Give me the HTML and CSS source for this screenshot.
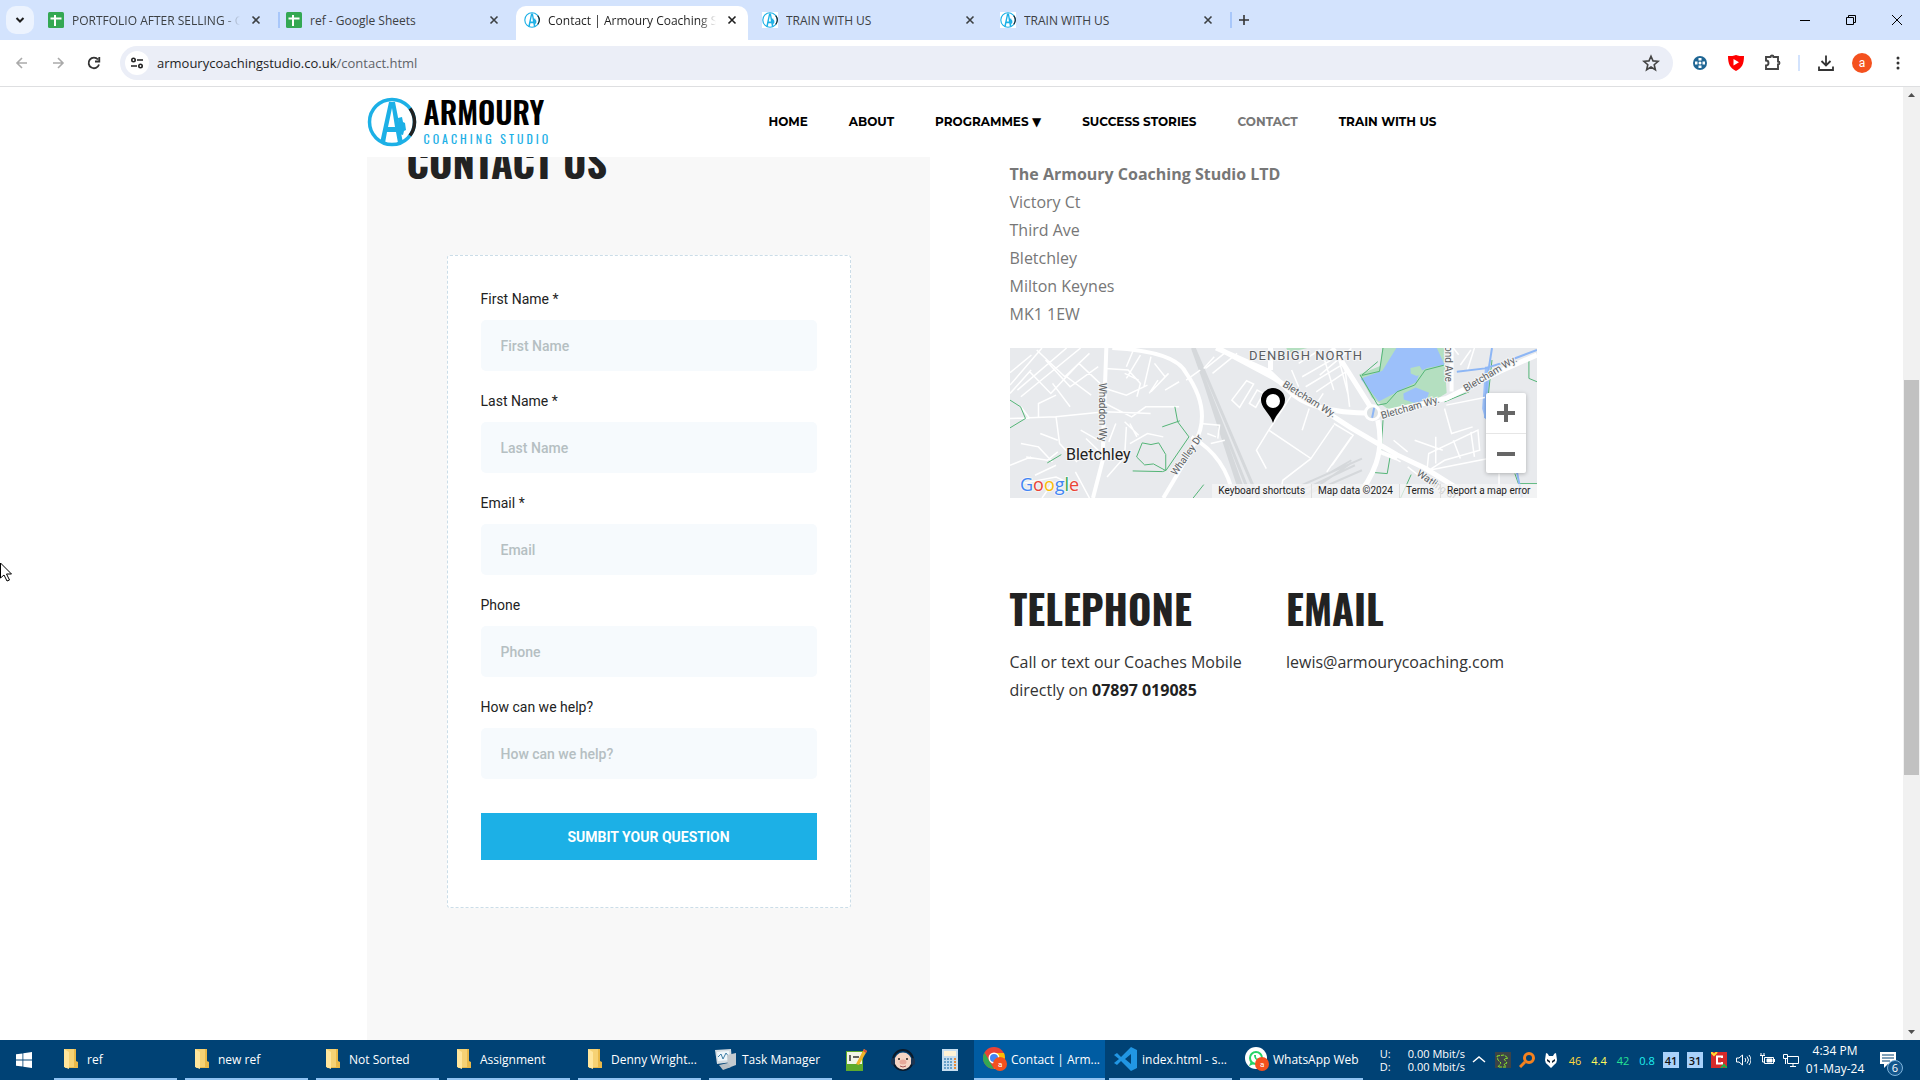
FILE: index.html
```html
<!DOCTYPE html>
<html lang="en">
<head>
<meta charset="utf-8">
<title>Contact | Armoury Coaching Studio</title>
<link rel="stylesheet" href="styles.css">
</head>
<body>
<svg class="defs" aria-hidden="true">
  <symbol id="sheet" viewBox="0 0 16 16"><rect width="16" height="16" rx="1.5" fill="#34a853"/><path d="M7 3v11M2.500 6.500h11" stroke="#fff" stroke-width="2"/></symbol>
  <symbol id="mark" viewBox="0 0 50 50"><circle cx="25" cy="25" r="22.500" fill="none" stroke="#1cb0e6" stroke-width="3.500"/><path d="M43 11.500A22.500 22.500 0 0 1 43 38.500" fill="none" stroke="#222" stroke-width="3.500"/><path d="M13 46 22 5h6l8 41h-5l-2-11h-9l-2 11zM21 30h7l-3-19z" fill="#1cb0e6" fill-rule="evenodd"/><path d="m31 21 4-1 1 5 2 1 1 7-2 1-1 4-4-1z" fill="#1cb0e6"/></symbol>
  <symbol id="x" viewBox="0 0 10 10"><path d="m1.500 1.500 7 7m0-7-7 7" stroke="currentColor" stroke-width="1.600"/></symbol>
  <symbol id="folder" viewBox="0 0 24 24"><path d="M5 2h12v12l2 1v6H6z" fill="#e9b94a"/><path d="M5 2h10v18H5z" fill="#f6d274"/><path d="m5 2 5 3v17l-5-2z" fill="#ffe69d"/></symbol>
</svg>

<div class="tabstrip">
  <button class="tab-search" aria-label="Search tabs"><svg width="10" height="8"><path d="m1.500 2 3.500 3.500L8.500 2" fill="none" stroke="#1f1f1f" stroke-width="2"/></svg></button>
  <div class="tab"><svg class="fav"><use href="#sheet"/></svg><span class="tab-title fade">PORTFOLIO AFTER SELLING - Google Sheets</span><button class="tab-close" aria-label="Close"><svg><use href="#x"/></svg></button></div>
  <div class="tab divided"><svg class="fav"><use href="#sheet"/></svg><span class="tab-title">ref - Google Sheets</span><button class="tab-close" aria-label="Close"><svg><use href="#x"/></svg></button></div>
  <div class="tab active"><svg class="fav"><use href="#mark"/></svg><span class="tab-title fade">Contact | Armoury Coaching Studio</span><button class="tab-close" aria-label="Close"><svg><use href="#x"/></svg></button></div>
  <div class="tab"><svg class="fav white"><use href="#mark"/></svg><span class="tab-title">TRAIN WITH US</span><button class="tab-close" aria-label="Close"><svg><use href="#x"/></svg></button></div>
  <div class="tab"><svg class="fav white"><use href="#mark"/></svg><span class="tab-title">TRAIN WITH US</span><button class="tab-close" aria-label="Close"><svg><use href="#x"/></svg></button></div>
  <button class="new-tab divided" aria-label="New tab"><svg width="12" height="12"><path d="M6 1v10M1 6h10" stroke="#333" stroke-width="1.600"/></svg></button>
  <div class="window-buttons">
    <button aria-label="Minimise"><svg width="12" height="12"><path d="M1 6.500h10" stroke="#000"/></svg></button>
    <button aria-label="Restore"><svg width="12" height="12"><path d="M1.500 3.500h7v7h-7zM3.500 3V1.500h7v7H9" fill="none" stroke="#000"/></svg></button>
    <button aria-label="Close window"><svg width="12" height="12"><path d="m1 1 10 10M11 1 1 11" stroke="#000"/></svg></button>
  </div>
</div>

<div class="toolbar">
  <button class="tool" aria-label="Back"><svg width="16" height="16"><path d="M13 8H3m5-5L3 8l5 5" fill="none" stroke="#aaa" stroke-width="1.600"/></svg></button>
  <button class="tool" aria-label="Forward"><svg width="16" height="16"><path d="M3 8h10M8 3l5 5-5 5" fill="none" stroke="#aaa" stroke-width="1.600"/></svg></button>
  <button class="tool" aria-label="Reload"><svg width="16" height="16"><path d="M13 9.500A5.300 5.300 0 1 1 12 4.500M13.300 2v4.500H9" fill="none" stroke="#333" stroke-width="1.800"/></svg></button>
  <div class="omnibox">
    <button class="site-info" aria-label="Site information"><svg width="14" height="14" fill="none" stroke="#222" stroke-width="1.600"><circle cx="3.500" cy="4" r="1.700"/><path d="M7 4h6M1 10h6"/><circle cx="10.500" cy="10" r="1.700"/></svg></button>
    <span class="url">armourycoachingstudio.co.uk<span>/contact.html</span></span>
    <button class="star" aria-label="Bookmark"><svg width="18" height="18"><path d="m9 2.200 2 4.700 5.100.4-3.900 3.400 1.200 5L9 13l-4.400 2.700 1.200-5-3.900-3.400L7 6.900z" fill="none" stroke="#444" stroke-width="1.600"/></svg></button>
  </div>
  <div class="extensions">
    <button class="ext" aria-label="Extension"><svg width="16" height="16"><circle cx="8" cy="8" r="7" fill="#1f6694"/><path d="M6.500 3h3v2.500h-3zM6.500 10.500h3V13h-3zM3 6.500h2.500v3H3zM10.500 6.500H13v3h-2.500z" fill="#fff"/><circle cx="8" cy="8" r="1.500" fill="#fff"/></svg></button>
    <button class="ext" aria-label="Video blocker"><svg width="16" height="16"><path d="M8 0c2 1 5 1 8 1 0 8-2 12-8 15C2 13 0 9 0 1c3 0 6 0 8-1z" fill="#f00"/><path d="m5.500 4 5.500 3.200-5.500 3.200z" fill="#fff"/></svg></button>
    <button class="ext" aria-label="Extensions"><svg width="18" height="18"><path d="M3 3h4.500a1.500 1.500 0 0 1 3 0H15v4.500a1.500 1.500 0 0 1 0 3V15H3v-3.500a2.500 2.500 0 0 0 0-5z" fill="none" stroke="#444" stroke-width="1.900"/></svg></button>
    <span class="rule"></span>
    <button class="ext" aria-label="Downloads"><svg width="18" height="18"><path d="M9 1.500v9M4.500 7 9 11.500 13.500 7M2 12.500V16h14v-3.500" fill="none" stroke="#333" stroke-width="1.800"/></svg></button>
    <button class="ext avatar" aria-label="Profile">a</button>
    <button class="ext" aria-label="Menu"><svg width="4" height="16" fill="#333"><circle cx="2" cy="3" r="1.500"/><circle cx="2" cy="8" r="1.500"/><circle cx="2" cy="13" r="1.500"/></svg></button>
  </div>
</div>

<div class="viewport">
  <div class="page">
    <header class="site-header">
      <div class="container header-row">
        <a class="brand" href="#"><svg width="50" height="50"><use href="#mark"/></svg><span class="brand-text"><strong>ARMOURY</strong><span>COACHING STUDIO</span></span></a>
        <nav class="site-nav"><a href="#">HOME</a><a href="#">ABOUT</a><a href="#">PROGRAMMES <span class="caret">▼</span></a><a href="#">SUCCESS STORIES</a><a class="current" href="#">CONTACT</a><a href="#">TRAIN WITH US</a></nav>
      </div>
    </header>
    <main class="container content">
      <section class="enquiry">
        <h1>CONTACT US</h1>
        <form class="card">
          <div class="field"><label for="first">First Name *</label><input id="first" type="text" placeholder="First Name"></div>
          <div class="field"><label for="last">Last Name *</label><input id="last" type="text" placeholder="Last Name"></div>
          <div class="field"><label for="email">Email *</label><input id="email" type="email" placeholder="Email"></div>
          <div class="field"><label for="phone">Phone</label><input id="phone" type="tel" placeholder="Phone"></div>
          <div class="field"><label for="help">How can we help?</label><input id="help" type="text" placeholder="How can we help?"></div>
          <button class="submit" type="button">SUMBIT YOUR QUESTION</button>
        </form>
      </section>
      <section class="details">
        <address><strong>The Armoury Coaching Studio LTD</strong><br>Victory Ct<br>Third Ave<br>Bletchley<br>Milton Keynes<br>MK1 1EW</address>
        <div class="map">
          <svg class="map-art" viewBox="29 24 1499 449" preserveAspectRatio="none" fill="none">
            <path fill="#b4dfc0" d="M815 24h60l-55 14zM1088 24h175l8 135-40 25-125 24-48-35-36-70 60-25z"/>
            <path fill="#9cc0fa" d="M1128 24h115l22 50-50 10-20 10-10 32-55 30-52 28-52-68 62-24zM1148 160l35-18 38 16-8 24-36 6-28-10zM1380 80l12 0-2 165-10-10-8-30z"/>
            <path fill="#b4dfc0" d="M1168 84l26-6 12 20-20 10-17-8z"/>
            <g stroke="#d5d8db" stroke-width="3"><path d="M548 24 700 473M553 24 735 473M556 40 690 473M560 60 715 473"/><path stroke-width="2" d="M815 455 1030 355M830 465 1010 375M850 473 1030 390M880 455 1000 368M935 400 1000 360"/></g>
            <g stroke="#fff" stroke-width="1.500">
              <path d="M29 98 90 45M29 135 120 24M50 150 190 24M60 170 230 24M85 95l60 65 80-90M105 30l80 80 70-70M29 160l60-70M130 60l70 80 80-60M150 130l50 70M190 110l70 55M225 70l60 60M29 235l130-5 140-15 130 5M160 230l10 80 50 55M110 235v-45l50-25M85 235l-25-35M60 310l50 10 40 45M75 350l60 10 30-25M165 300l-50-20M29 375l60-25M100 405l60-30M60 430l100-20 40 20M120 473l30-45 50-5M215 395l40 78M300 85l65 5 35 40-10 40M300 145l60 20 60-30M300 190l75 40 40-30 95 0M380 30l-20 50M400 45l-40 70M430 50l-20 90M450 120l-25 40M355 100l40 20M355 245l40 40M330 250l-20 55M280 300l-50-30M245 295l35 35M360 260l-5 90-50 60M370 310l50-30 45 10M390 290l-20-40M480 100l-50 55M470 150l40-25M530 120l40-30M440 70l30 40M580 85l30-35M570 250l55 5-5 40M590 280l25 10M600 310l40-10"/>
              <path d="M585 85l60-50M605 100l70-60M660 180l42-58 20 10-40 70zM710 190l22-40 18 10-22 42zM830 165l-65 105-35 60 28 55M765 270l120 85 65-100M880 205l-20 65M920 160l-25 40M850 70l60-40M860 110l100-60M870 140l110-70M900 155l85-60M830 90l20 50M915 30l35 120M960 40l30 120M1000 25l-90 80M980 70l15 130M885 355l-80 65-10 50M950 250l55 35-60 90M1000 290l-70 105"/>
              <path d="M1265 205l20 75 60-20M1270 195l120-25M1180 300l80 30M1215 390l5-50 140-70 5 60-100 30-45 30 170-35M1140 365l-50-30M1160 380l50 40M1290 24l15 20M1310 75l30-45M1330 90l20-66M1120 300l40 35M1240 290v80M1290 300l20 55M1340 275l10 75M1420 400v60"/>
            </g>
            <g stroke="#54b577" stroke-width="1">
              <path d="M29 180l30 20 14 35-44 28M135 368l40-25M498 200l8 45 32 45-65 100-10 4-85-2M462 260l50-18M389 350l16-42 25 5 22-5 20 35 0 48-35-20-25 3zM1090 24l-10 70-50 12M1030 105l45-40M1025 105l50 90 25-5 30-35 50-20 30-45 55-15M1085 340l25 10-8 50-35-3M1090 240l-5 90M1265 185l70-30M1470 70l35-15v60l23 10M1465 400l10 30h53M1400 60l-15 150M1140 473l30-70M550 473l30-40"/>
            </g>
            <g stroke="#8db6f5" stroke-width="2"><path d="M1300 95l80-10 60-20 88-35M1400 24l-15 100-5 110M1470 390l15 80"/></g>
            <g stroke="#fff" stroke-width="4">
              <path d="M303 24l-8 235-2 100-28 114M320 24q180 10 210 75 60 90 40 170-10 40-105 204M545 290q100 60 120 183"/>
              <path stroke-width="5" d="M615 24l150 70 55 55q60 70 240 70M1080 220l190-45 150-80 108-50M1075 240q15 70-5 130t-60 103M1060 210l-90-150-25-36M620 24l160 90 220 150 130 80 80 40 120 79M770 90V24"/>
              <path d="M1285 24v130M1080 335l50 20"/>
            </g>
            <ellipse cx="1060" cy="218" rx="20" ry="21" fill="#dce1e3" stroke="#fff" stroke-width="3"/><path d="M1065 203l-6 30" stroke="#8db6f5" stroke-width="2"/>
          </svg>
          <svg class="map-labels">
            <text class="area" x="239" y="12">DENBIGH NORTH</text>
            <text class="town" x="56" y="112">Bletchley</text>
            <text class="road" transform="translate(89 35) rotate(90)">Whaddon Wy</text>
            <text class="road" transform="translate(166 128) rotate(-55)">Whalley Dr</text>
            <text class="road" transform="translate(272 38) rotate(32)">Bletcham Wy.</text>
            <text class="road" transform="translate(372 71) rotate(-16)">Bletcham Wy.</text>
            <text class="road" transform="translate(456 44) rotate(-31)">Bletcham Wy.</text>
            <text class="road" transform="translate(435 -2) rotate(90)">ond Ave</text>
            <text class="road" transform="translate(406 127) rotate(34)">Watling St</text>
            <path d="M263 75c-3-10-12-15-12-23a12 12 0 0 1 24 0c0 8-9 13-12 23z"/><circle cx="263" cy="53" r="7" fill="#fff"/>
            <text class="google" x="10" y="143"><tspan fill="#4285f4">G</tspan><tspan fill="#ea4335">o</tspan><tspan fill="#fbbc05">o</tspan><tspan fill="#4285f4">g</tspan><tspan fill="#34a853">l</tspan><tspan fill="#ea4335">e</tspan></text>
          </svg>
          <div class="map-zoom"><button aria-label="Zoom in"><svg width="18" height="18"><path d="M9 0v18M0 9h18" stroke="#666" stroke-width="4"/></svg></button><button aria-label="Zoom out"><svg width="18" height="18"><path d="M0 9h18" stroke="#666" stroke-width="4"/></svg></button></div>
          <div class="map-legal"><a href="#">Keyboard shortcuts</a><span>Map data ©2024</span><a href="#">Terms</a><a href="#">Report a map error</a></div>
        </div>
        <div class="reach">
          <div><h2>TELEPHONE</h2><p>Call or text our Coaches Mobile directly on <strong>07897 019085</strong></p></div>
          <div><h2>EMAIL</h2><p><a href="#">lewis@armourycoaching.com</a></p></div>
        </div>
      </section>
    </main>
  </div>
  <div class="scrollbar"><svg width="17" height="17"><path d="m5 10 3.500-4 3.500 4z" fill="#505050"/></svg><div class="track"><div class="thumb"></div></div><svg width="17" height="17"><path d="m5 7 3.500 4L12 7z" fill="#505050"/></svg></div>
</div>

<div class="taskbar">
  <button class="start" aria-label="Start"><svg width="16" height="16" fill="#fff"><path d="M0 2.300 6.500 1.400v6.200H0zM7.300 1.300 16 0v7.600H7.300zM0 8.400h6.500v6.200L0 13.700zM7.300 8.400H16V16l-8.700-1.300z"/></svg></button>
  <div class="tasks">
    <button class="task"><svg><use href="#folder"/></svg>ref</button>
    <button class="task"><svg><use href="#folder"/></svg>new ref</button>
    <button class="task"><svg><use href="#folder"/></svg>Not Sorted</button>
    <button class="task"><svg><use href="#folder"/></svg>Assignment</button>
    <button class="task"><svg><use href="#folder"/></svg>Denny Wright...</button>
    <button class="task"><svg viewBox="0 0 24 24"><path d="m1 3 16-1 1 13-15 2z" fill="#d5dde2"/><path d="m3 5 12-1 1 9-12 1z" fill="#eef6fb"/><path d="m4 10 3-3 2 5 3-6 3 4" fill="none" stroke="#3d7da5"/><path d="m13 8 9-2v12l-8 3z" fill="#c3cacf"/><path d="m5 18 9-2 3 4-8 3z" fill="#b7bfc5"/></svg>Task Manager</button>
  </div>
  <div class="pinned">
    <button aria-label="Notepad++"><svg viewBox="0 0 24 24"><path d="M2 3h17v20H2z" fill="#5eaa2c"/><path d="M3 4h15v12H3z" fill="#f2f5e8"/><path d="M6 7v6M9 9h6" stroke="#333" stroke-width="1.500"/><path d="m12 16 8-15 3 2-8 14z" fill="#f0b429"/><path d="m20 1 3 2-1 2-3-2z" fill="#d6503d"/></svg></button>
    <button aria-label="Assistant"><svg viewBox="0 0 24 24"><circle cx="12" cy="12" r="10" fill="none" stroke="#0b1a2a" stroke-width="2"/><circle cx="12" cy="13" r="8.500" fill="#f6d5c4"/><ellipse cx="12" cy="14" rx="3.500" ry="2.500" fill="#e8a99a"/><circle cx="8" cy="11" r="1" fill="#222"/><circle cx="16" cy="11" r="1" fill="#222"/><path d="M9 18q3 2 6 0" fill="none" stroke="#a55"/><rect y="10" width="4" height="7" rx="2" fill="#1b3552"/><rect x="20" y="10" width="4" height="7" rx="2" fill="#1b3552"/></svg></button>
    <button aria-label="Calculator"><svg viewBox="0 0 24 24"><path d="M4 1h16v22H4z" fill="#c7def0"/><path d="M6 3h12v5H6z" fill="#fff3d6"/><path d="M6 11h9M6 14h9M6 17h9M6 20h9" stroke="#4b8dbd" stroke-width="1.500" stroke-dasharray="2 1"/><path d="M17 10v11" stroke="#e58b3a" stroke-width="2" stroke-dasharray="2 1"/></svg></button>
  </div>
  <div class="tasks">
    <button class="task on"><svg viewBox="0 0 24 24"><circle cx="11" cy="11" r="11" fill="#ea4335"/><path d="M1.500 5.500 11 22A11 11 0 0 1 1.500 5.500z" fill="#34a853"/><path d="M11 22 22 11a11 11 0 0 0-1-5H11z" fill="#fbbc05"/><circle cx="11" cy="11" r="5.500" fill="#fff"/><circle cx="11" cy="11" r="4" fill="#4285f4"/><circle cx="17" cy="17" r="7" fill="#f4511e"/><text x="15" y="20">a</text></svg>Contact | Arm...</button>
    <button class="task"><svg viewBox="0 0 24 24"><path d="m17 0 6 3v18l-6 3L7 14l-4 4-3-2 5-4-5-4 3-2 4 4zm0 7-6 5 6 5z" fill="#2196e3" fill-rule="evenodd"/></svg>index.html - s...</button>
    <button class="task"><svg viewBox="0 0 24 24"><circle cx="11" cy="11" r="11" fill="#fff"/><circle cx="11" cy="11" r="6" fill="none" stroke="#25d366" stroke-width="2"/><path d="m4 19 2-5 3 3zM9 8q0 5 5 6l1-2-2-1-1 1-1-2v-2z" fill="#25d366"/><circle cx="17" cy="17" r="7" fill="#f4511e"/><text x="15" y="20">a</text></svg>WhatsApp Web</button>
  </div>
  <div class="netspeed"><span>U:</span><span>0.00 Mbit/s</span><span>D:</span><span>0.00 Mbit/s</span></div>
  <div class="tray">
    <svg><path d="m2 10 6-5 6 5" fill="none" stroke="#fff" stroke-width="1.500"/></svg>
    <svg><path fill="#3c4347" d="M0 0h16v16H0z"/><path d="m2 4 7-1 4 3-4 1 3 4-3 1 2 3H3l3-4-3-3z" fill="none" stroke="#8be52c" stroke-dasharray="3 1"/></svg>
    <svg><circle cx="10" cy="6" r="4.500" fill="none" stroke="#f5821f" stroke-width="3"/><path d="m6 10-5 5" stroke="#f5821f" stroke-width="3"/></svg>
    <svg><path d="M3 1q2 0 3 3h4q1-3 3-3l1 7q0 3-3 5l-3 3-3-3Q2 11 2 8z" fill="#fff"/><path d="m4 7 3 2v2L4 9zM12 7 9 9v2l3-2z" fill="#123"/></svg>
    <span class="yellow">46</span><span class="pale">4.4</span><span class="mint">42</span><span class="aqua">0.8</span>
    <span class="chip">41</span><span class="chip">31</span>
    <svg><path fill="#d52b2b" d="M0 0h16v16H0z"/><path d="M11 6V4.500H6v7h5V10" fill="none" stroke="#fff" stroke-width="2"/><path d="m0 0 3 3 3-3" stroke="#ffdc31" fill="none" stroke-width="2"/><path d="m10 16 3-3 3 3" stroke="#20b34a" fill="none" stroke-width="2"/></svg>
    <svg fill="none" stroke="#fff"><path d="M1.500 6v4H4l3.500 3V3L4 6zM10 6q1.500 2 0 4M12 4.500q3 3.500 0 7M14 3q4 5 0 10"/></svg>
    <svg fill="none" stroke="#fff"><path d="M5.500 5.500h9v6h-9zM15.500 7v3M1 3.500h5M2 1v2M5 1v2M3.500 4v6h2"/><path fill="#fff" d="M8 7h5v3H8z"/></svg>
    <svg fill="none" stroke="#fff"><path d="M4.500 4.500h11v7h-11zM10 12v2M7 14.500h6M.500 2.500h4v4h-4zM2.500 7v5"/></svg>
  </div>
  <div class="clock"><span>4:34 PM</span><span>01-May-24</span></div>
  <button class="notices" aria-label="Notifications"><svg width="26" height="22"><path d="M2 3h16v12h-8l-4 4v-4H2z" fill="#fff"/><path d="M4 6h12M4 9h12M4 12h8" stroke="#004275"/></svg><span class="badge">6</span></button>
</div>
<svg class="pointer" width="12" height="20"><path d="M.500 1v15l3.500-3 3 6 2.500-1-3-6h5z" fill="#fff" stroke="#000"/></svg>
</body>
</html>
```
FILE: styles.css
```css
* { box-sizing: border-box; }
body { margin: 0; height: 100vh; display: flex; flex-direction: column; overflow: hidden; background: #fff; font-family: "Open Sans", sans-serif; font-size: 12px; }
button { border: 0; padding: 0; background: none; font: inherit; color: inherit; display: flex; align-items: center; justify-content: center; }
a { color: inherit; text-decoration: none; }
h1, h2, p { margin: 0; }
svg { flex: none; }
.defs { position: absolute; width: 0; height: 0; }

/* Browser tabs */
.tabstrip { flex: none; height: 40px; display: flex; align-items: center; background: #d3e3fd; }
.tab-search { width: 28px; height: 28px; margin: 0 6px; border-radius: 10px; background: #ecf3fe; }
.tab { width: 238px; height: 28px; padding: 0 14px 0 8px; display: flex; align-items: center; gap: 8px; color: #3c4043; }
.tab.active { align-self: flex-end; width: 232px; height: 34px; margin-right: 6px; padding: 0 8px 6px 8px; background: #fff; border-radius: 10px 10px 0 0; color: #1f1f1f; }
.fav { width: 16px; height: 16px; }
.fav.white { background: #fff; }
.tab-title { flex: 1; overflow: hidden; white-space: nowrap; }
.fade { mask-image: linear-gradient(90deg, #000 90%, transparent); }
.tab-close { width: 16px; height: 16px; }
.tab-close svg { width: 10px; height: 10px; }
.divided { background: linear-gradient(#a8c7fa, #a8c7fa) 0 center / 2px 16px no-repeat; }
.new-tab { width: 28px; height: 28px; }
.window-buttons { margin-left: auto; display: flex; }
.window-buttons button { width: 46px; height: 40px; }

/* Address bar */
.toolbar { flex: none; height: 47px; padding: 0 4px; display: flex; align-items: center; border-bottom: 1px solid #dedfe1; }
.tool { width: 36px; height: 34px; }
.omnibox { flex: 1; height: 34px; margin-left: 8px; padding: 0 12px 0 5px; display: flex; align-items: center; gap: 8px; border-radius: 17px; background: #ebeef7; font-size: 13px; }
.site-info { width: 24px; height: 24px; border-radius: 50%; background: #fff; }
.url { color: #1f1f1f; }
.url span { color: #5f6368; }
.star { margin-left: auto; width: 20px; }
.extensions { display: flex; align-items: center; padding-left: 9px; }
.ext { width: 36px; height: 30px; }
.rule { width: 2px; height: 16px; margin: 0 8px; background: #d3e3fd; }
.avatar { width: 20px; height: 20px; margin: 0 8px; border-radius: 50%; background: #f4511e; color: #fff; font-family: Roboto, sans-serif; }

/* Web page */
.viewport { flex: 1; min-height: 0; display: flex; }
.page { flex: 1; overflow: hidden; }
.container { width: 100%; max-width: 1170px; margin: 0 auto; }
.site-header { position: relative; z-index: 1; background: #fff; }
.header-row { height: 70px; padding: 0 100px 0 0; display: flex; align-items: center; justify-content: space-between; }
.brand { display: flex; align-items: center; gap: 7px; color: #1cb0e6; }
.brand-text { display: flex; flex-direction: column; font-family: Oswald, "Liberation Sans Narrow", sans-serif; font-size: 12px; font-weight: 400; line-height: 20px; letter-spacing: 3px; }
.brand-text strong { color: #000; font-size: 30px; font-weight: 600; line-height: 34px; letter-spacing: 0; }
.site-nav { display: flex; gap: 41px; font: 700 12px/20px Montserrat, sans-serif; color: #000; }
.caret { font-family: "DejaVu Sans", sans-serif; }
.current { color: #777; }
.content { display: grid; grid-template-columns: 563fr 527fr; gap: 80px; }
.enquiry { padding: 0 79px 160px 80px; background: #f8f8f8; }
h1, h2 { font-family: Oswald, "Liberation Sans Narrow", sans-serif; font-size: 40px; line-height: 44px; font-weight: 700; color: #222; white-space: nowrap; }
h1 { margin: -18px 0 72px -40px; }
.card { padding: 33px 33px 47px; border: 1px dashed #cbdde8; border-radius: 3px; background: #fff; font-family: Roboto, sans-serif; font-size: 14px; }
.field { display: flex; flex-direction: column; gap: 11px; margin-bottom: 20px; color: #222; }
.field label { line-height: 20px; }
.field input { width: 100%; height: 51px; padding: 0 20px; border: 0; border-radius: 5px; background: #f6fafd; font: 500 14px Roboto, sans-serif; }
.field input::placeholder { color: #b5bfc2; opacity: 1; }
.submit { width: 100%; height: 47px; margin-top: 34px; background: #1cb0e6; color: #fff; font-weight: 700; }
.details { padding-top: 3px; font-size: 16px; line-height: 28px; color: #777; }
address { font-style: normal; }
.map { position: relative; height: 150px; margin: 20px 0 88px; overflow: hidden; background: #e8eaed; font-family: Roboto, sans-serif; }
.map-art, .map-labels { position: absolute; inset: 0; width: 100%; height: 100%; }
.map-art * { vector-effect: non-scaling-stroke; }
.map-labels text { fill: #5a5d61; stroke: #f4f5f6; stroke-width: 2px; paint-order: stroke; }
.map-labels .road { font-size: 10px; }
.map-labels .area { font-size: 13px; letter-spacing: 1px; }
.map-labels .town { font-size: 16px; fill: #222; }
.map-labels .google { font-size: 18px; font-family: "Open Sans", sans-serif; font-weight: 500; }
.map-zoom { position: absolute; top: 45px; right: 11px; width: 40px; border-radius: 2px; background: #fff; box-shadow: 0 1px 4px rgb(0 0 0 / 25%); }
.map-zoom button { width: 100%; height: 40px; }
.map-zoom button + button { border-top: 1px solid #e6e6e6; }
.map-legal { position: absolute; right: 0; bottom: 0; display: flex; line-height: 14px; font-size: 10px; color: #222; background: rgb(245 245 245 / 75%); }
.map-legal > * { padding: 0 6px; }
.map-legal > * + * { border-left: 1px solid #ddd; }
.reach { display: grid; grid-template-columns: 1fr 1fr; gap: 26px; color: #333; }
.reach h2 { margin-bottom: 18px; }
.reach strong { color: #222; }
.scrollbar { width: 17px; display: flex; flex-direction: column; background: #f1f1f1; }
.track { flex: 1; padding: 0 1px; }
.thumb { height: 43%; background: #c1c1c1; }
.track::before { content: ""; display: block; height: 30%; }

/* Desktop taskbar */
.taskbar { flex: none; height: 40px; display: flex; background: #004275; color: #fff; white-space: nowrap; }
.start { width: 47px; margin-right: 7px; }
.tasks { display: flex; gap: 8px; }
.task { width: 123px; padding: 0 0 0 5px; gap: 4px; justify-content: flex-start; border-bottom: 2px solid #8fc3f3; }
.task svg { width: 24px; height: 24px; }
.task text { fill: #fff; font: 8px Roboto, sans-serif; }
.task.on { width: 131px; margin: 0 -4px; padding-left: 9px; background: #005ca2; }
.pinned { display: flex; padding-right: 5px; }
.pinned button { width: 47px; }
.pinned svg { width: 24px; height: 24px; }
.netspeed { display: grid; grid-template-columns: 28px auto; align-content: center; margin-left: auto; font-size: 11px; line-height: 13px; }
.tray { display: flex; align-items: center; margin-left: 2px; }
.tray > * { width: 16px; height: 16px; margin: 0 4px; display: flex; align-items: center; justify-content: center; font-size: 11px; }
.tray .yellow { color: #ffd83b; }
.tray .pale { color: #fff95c; }
.tray .mint { color: #25e393; }
.tray .aqua { color: #1ff0f0; }
.tray .chip { background: #a9d2fb; color: #111; font-weight: 600; }
.clock { width: 64px; display: flex; flex-direction: column; align-items: center; justify-content: center; line-height: 18px; }
.notices { position: relative; width: 48px; margin-right: 5px; }
.badge { position: absolute; right: 12px; bottom: 4px; width: 16px; height: 16px; border: 1px solid #7fb4dc; border-radius: 50%; background: #13568c; font-size: 11px; line-height: 14px; text-align: center; }
.pointer { position: absolute; left: 0; top: 52%; }
```
